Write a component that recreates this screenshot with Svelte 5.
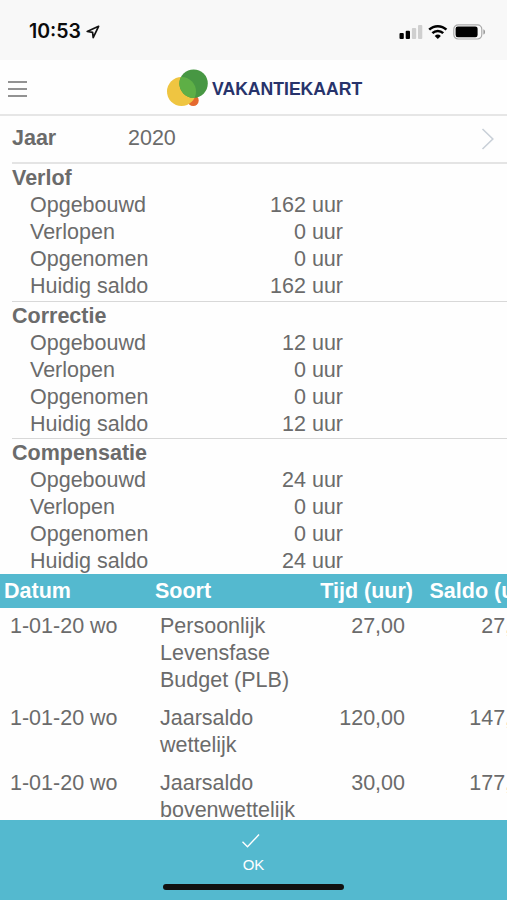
<script lang="ts">
  type Balance = {
    title: string;
    lines: Array<{ label: string; hours: number }>;
  };

  const year = 2020;

  function balance(title: string, built: number, expired: number, taken: number): Balance {
    return {
      title,
      lines: [
        { label: "Opgebouwd", hours: built },
        { label: "Verlopen", hours: expired },
        { label: "Opgenomen", hours: taken },
        { label: "Huidig saldo", hours: built - expired - taken },
      ],
    };
  }

  const balances = [
    balance("Verlof", 162, 0, 0),
    balance("Correctie", 12, 0, 0),
    balance("Compensatie", 24, 0, 0),
  ];

  const entries = [
    { date: "1-01-20 wo", kind: "Persoonlijk Levensfase Budget (PLB)", time: "27,00", total: "27,00" },
    { date: "1-01-20 wo", kind: "Jaarsaldo wettelijk", time: "120,00", total: "147,00" },
    { date: "1-01-20 wo", kind: "Jaarsaldo bovenwettelijk", time: "30,00", total: "177,00" },
  ];
</script>

<div class="screen">
  <div class="status">
    <div class="clock">
      <span>10:53</span>
      <svg width="14" height="14" viewBox="0 0 14 14" aria-hidden="true">
        <path d="M12.6 1.3 1.2 6.5l5.4.8.6 5.3z" fill="none" stroke="#111" stroke-width="1.7" stroke-linejoin="round" />
      </svg>
    </div>
    <div class="signals">
      <svg width="24" height="16" viewBox="0 0 24 16" aria-hidden="true">
        <rect x="0.5" y="9" width="4.3" height="6" rx="1" />
        <rect x="6.7" y="6.8" width="4.3" height="8.2" rx="1" />
        <rect x="12.9" y="4" width="4.3" height="11" rx="1" fill="#cfcfcf" />
        <rect x="19" y="1" width="4.3" height="14" rx="1" fill="#cfcfcf" />
      </svg>
      <svg width="20" height="16" viewBox="0 0 20 16" aria-hidden="true">
        <g fill="none" stroke="#000" stroke-width="2.5">
          <path d="M1.2 5.7a12.4 12.4 0 0 1 17.2 0" />
          <path d="M4.4 9.1a7.8 7.8 0 0 1 10.8 0" />
        </g>
        <path d="M9.8 15 6.7 11.9a4.5 4.5 0 0 1 6.2 0z" />
      </svg>
      <svg width="33" height="16" viewBox="0 0 33 16" aria-hidden="true">
        <rect x=".8" y=".8" width="28" height="14.2" rx="4.4" fill="#fbfbfb" stroke="#a9a9a9" stroke-width="1.2" />
        <rect x="2.6" y="2.5" width="22" height="10.8" rx="2.2" />
        <path d="M30.4 5.2c2.2.6 2.2 4.8 0 5.4z" fill="#999" />
      </svg>
    </div>
  </div>

  <header class="bar">
    <button class="menu" type="button" aria-label="Menu">
      <span></span>
      <span></span>
      <span></span>
    </button>
    <div class="brand">
      <svg width="42" height="40" viewBox="0 0 42 40" aria-hidden="true">
        <defs>
          <clipPath id="yellow"><circle cx="14.5" cy="24.5" r="14.5" /></clipPath>
        </defs>
        <circle cx="26.2" cy="33.5" r="5.5" fill="#e5692f" />
        <circle cx="14.5" cy="24.5" r="14.5" fill="#efc541" />
        <circle cx="26.6" cy="16.6" r="14.2" fill="#479743" />
        <circle cx="26.6" cy="16.6" r="14.2" fill="#5eaf46" clip-path="url(#yellow)" />
      </svg>
      <h1>VAKANTIEKAART</h1>
    </div>
  </header>

  <main>
    <button class="year" type="button">
      <b>Jaar</b>
      <span>{year}</span>
      <svg width="14" height="22" viewBox="0 0 14 22" aria-hidden="true">
        <path d="m1.5 1 10.3 10L1.5 21" fill="none" stroke="#c9d0d8" stroke-width="1.6" />
      </svg>
    </button>

    {#each balances as b (b.title)}
      <section class="balance">
        <h2>{b.title}</h2>
        <dl>
          {#each b.lines as line (line.label)}
            <div class="line">
              <dt>{line.label}</dt>
              <dd>{line.hours} uur</dd>
            </div>
          {/each}
        </dl>
      </section>
    {/each}

    <div class="table">
      <div class="row head">
        <span>Datum</span>
        <span>Soort</span>
        <span class="num">Tijd (uur)</span>
        <span class="num">Saldo (uur)</span>
      </div>
      {#each entries as e}
        <div class="row">
          <span>{e.date}</span>
          <span>{e.kind}</span>
          <span class="num">{e.time}</span>
          <span class="num">{e.total}</span>
        </div>
      {/each}
    </div>
  </main>

  <footer>
    <button class="ok" type="button">
      <svg width="20" height="16" viewBox="0 0 20 16" aria-hidden="true">
        <path d="m1.5 8.8 5 5L18 1.6" fill="none" stroke="#fff" stroke-width="1.4" />
      </svg>
      <span>OK</span>
    </button>
    <div class="home"></div>
  </footer>
</div>

<style>
  :global(body) {
    margin: 0;
    overflow: hidden;
  }

  .screen {
    display: flex;
    flex-direction: column;
    width: 507px;
    height: 900px;
    overflow: hidden;
    background: #fefefe;
    color: #6b6b6b;
    font-family: "Liberation Sans", Arial, sans-serif;
    font-size: 21.5px;
    line-height: 27px;
  }

  button {
    padding: 0;
    border: 0;
    background: transparent;
    color: inherit;
    font: inherit;
    text-align: left;
  }

  svg {
    display: block;
    flex: none;
  }

  .status {
    flex: none;
    display: flex;
    align-items: center;
    justify-content: space-between;
    box-sizing: border-box;
    height: 60px;
    padding: 3px 21px 0 29px;
    background: #f8f8f8;
    color: #0b0b0b;
  }

  .clock {
    display: flex;
    align-items: center;
    gap: 5px;
    font-family: Inter, "Liberation Sans", sans-serif;
    font-size: 19.5px;
    font-weight: 600;
  }

  .signals {
    display: flex;
    align-items: center;
    gap: 5px;
  }

  .bar {
    flex: none;
    display: flex;
    align-items: center;
    box-sizing: border-box;
    height: 56px;
    padding-left: 8px;
    border-bottom: 2px solid #e6e6e6;
  }

  .menu {
    display: grid;
    gap: 5px;
    width: 19px;
    margin-top: 4px;
  }

  .menu span {
    height: 2px;
    background: #929292;
  }

  .brand {
    display: flex;
    align-items: center;
    gap: 3px;
    margin-left: 140px;
  }

  h1 {
    margin: 4px 0 0;
    color: #27336b;
    font-size: 17.6px;
    white-space: nowrap;
  }

  main {
    flex: 1;
    min-height: 0;
    overflow: hidden;
  }

  .year {
    display: flex;
    align-items: center;
    box-sizing: border-box;
    width: 495px;
    height: 48px;
    margin-left: 12px;
    padding: 0 12px 1px 0;
    border-bottom: 2px solid #e4e4e4;
  }

  .year b {
    width: 116px;
  }

  .year svg {
    margin-left: auto;
  }

  .balance {
    box-sizing: border-box;
    height: 137.5px;
    margin-left: 12px;
    padding-top: 1px;
    border-bottom: 1px solid #d8d8d8;
  }

  .balance:nth-of-type(3) {
    height: 135px;
    border-bottom: 0;
  }

  h2 {
    margin: 0;
    font-size: inherit;
    line-height: inherit;
  }

  dl {
    margin: 0;
    padding-left: 18px;
  }

  .line {
    display: flex;
    justify-content: space-between;
    width: 313px;
  }

  dd {
    margin: 0;
  }

  .table {
    width: 549px;
  }

  .row {
    display: grid;
    grid-template-columns: 150px 150px 105px 130px;
    padding: 5px 0 6px 10px;
  }

  .row .num {
    margin-right: 10px;
    text-align: right;
  }

  .head {
    grid-template-columns: 151px 150px 118px 130px;
    padding: 4px 0 3px 4px;
    background: #54b9cf;
    color: #fff;
    font-weight: 700;
  }

  footer {
    flex: none;
    display: flex;
    flex-direction: column;
    align-items: center;
    justify-content: space-between;
    box-sizing: border-box;
    height: 80px;
    padding: 13px 0 10px;
    background: #54b9cf;
    color: #fff;
  }

  .ok {
    display: grid;
    justify-items: center;
    gap: 6px;
    font-size: 15px;
    line-height: 20px;
  }

  .ok svg {
    margin-right: 5px;
  }

  .home {
    width: 181px;
    height: 6px;
    border-radius: 3px;
    background: #111;
  }
</style>
